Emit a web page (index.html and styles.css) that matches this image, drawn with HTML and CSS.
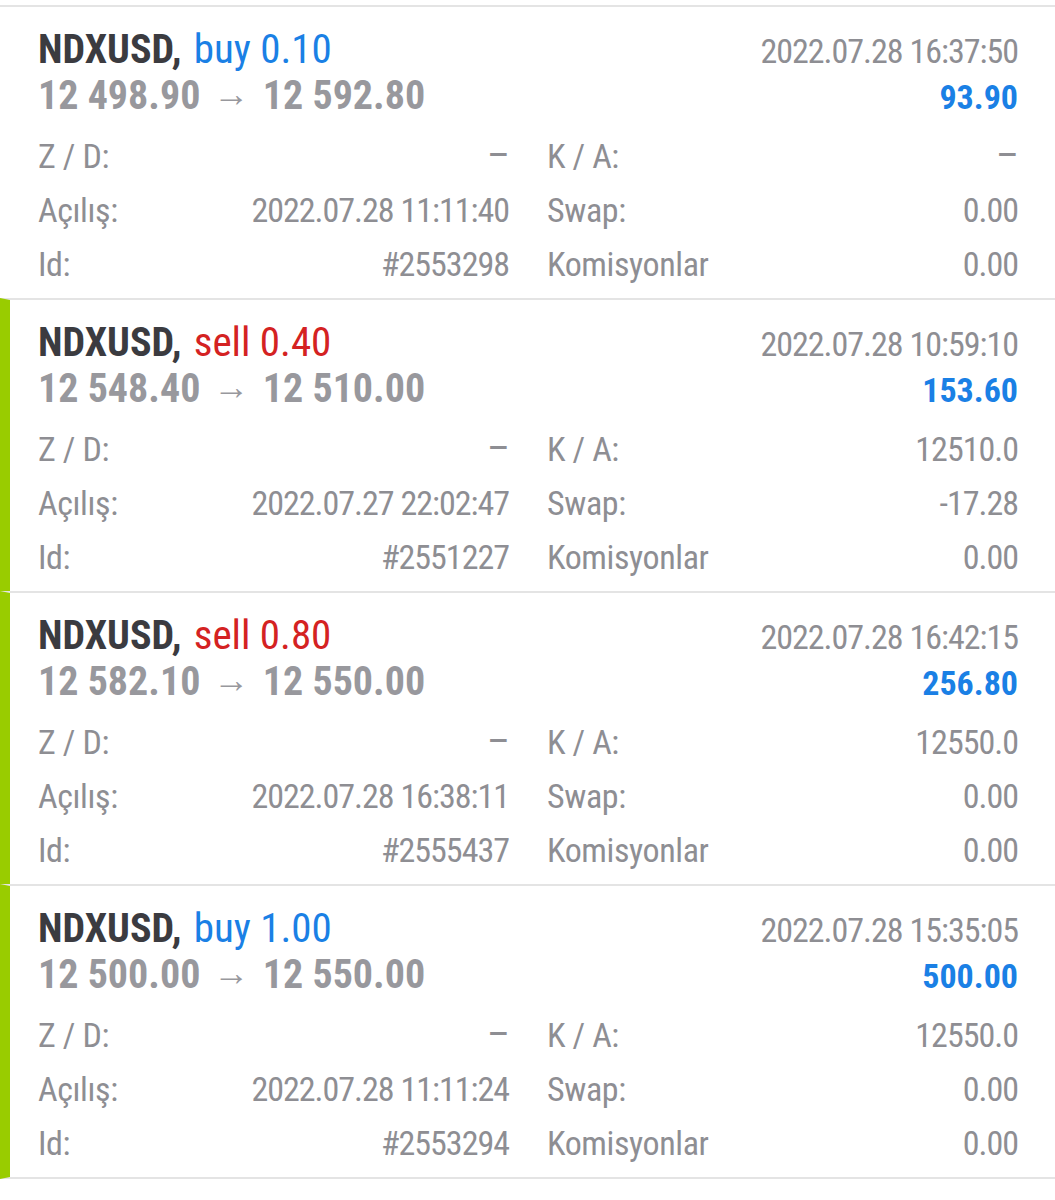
FILE: index.html
```html
<!DOCTYPE html>
<html lang="tr">
<head>
    <meta charset="UTF-8">
    <meta name="viewport" content="width=device-width, initial-scale=1.0">
    <title>Geçmiş</title>
    <link rel="stylesheet" href="styles.css">
</head>
<body>
    <div class="history">
        <div class="deal">
            <div class="deal-head">
                <div class="deal-title">
                    <div class="symbol">NDXUSD, <span class="buy">buy 0.10</span></div>
                    <div class="prices">12 498.90 <span class="arrow">&rarr;</span> 12 592.80</div>
                </div>
                <div class="deal-result">
                    <div class="time">2022.07.28 16:37:50</div>
                    <div class="profit">93.90</div>
                </div>
            </div>
            <div class="deal-info">
                <div class="info-row"><span>Z / D:</span><span class="dash">&ndash;</span></div>
                <div class="info-row"><span>K / A:</span><span class="dash">&ndash;</span></div>
                <div class="info-row"><span>Açılış:</span><span>2022.07.28 11:11:40</span></div>
                <div class="info-row"><span>Swap:</span><span>0.00</span></div>
                <div class="info-row"><span>Id:</span><span>#2553298</span></div>
                <div class="info-row"><span>Komisyonlar</span><span>0.00</span></div>
            </div>
        </div>

        <div class="deal marked">
            <div class="deal-head">
                <div class="deal-title">
                    <div class="symbol">NDXUSD, <span class="sell">sell 0.40</span></div>
                    <div class="prices">12 548.40 <span class="arrow">&rarr;</span> 12 510.00</div>
                </div>
                <div class="deal-result">
                    <div class="time">2022.07.28 10:59:10</div>
                    <div class="profit">153.60</div>
                </div>
            </div>
            <div class="deal-info">
                <div class="info-row"><span>Z / D:</span><span class="dash">&ndash;</span></div>
                <div class="info-row"><span>K / A:</span><span>12510.0</span></div>
                <div class="info-row"><span>Açılış:</span><span>2022.07.27 22:02:47</span></div>
                <div class="info-row"><span>Swap:</span><span>-17.28</span></div>
                <div class="info-row"><span>Id:</span><span>#2551227</span></div>
                <div class="info-row"><span>Komisyonlar</span><span>0.00</span></div>
            </div>
        </div>

        <div class="deal marked">
            <div class="deal-head">
                <div class="deal-title">
                    <div class="symbol">NDXUSD, <span class="sell">sell 0.80</span></div>
                    <div class="prices">12 582.10 <span class="arrow">&rarr;</span> 12 550.00</div>
                </div>
                <div class="deal-result">
                    <div class="time">2022.07.28 16:42:15</div>
                    <div class="profit">256.80</div>
                </div>
            </div>
            <div class="deal-info">
                <div class="info-row"><span>Z / D:</span><span class="dash">&ndash;</span></div>
                <div class="info-row"><span>K / A:</span><span>12550.0</span></div>
                <div class="info-row"><span>Açılış:</span><span>2022.07.28 16:38:11</span></div>
                <div class="info-row"><span>Swap:</span><span>0.00</span></div>
                <div class="info-row"><span>Id:</span><span>#2555437</span></div>
                <div class="info-row"><span>Komisyonlar</span><span>0.00</span></div>
            </div>
        </div>

        <div class="deal marked">
            <div class="deal-head">
                <div class="deal-title">
                    <div class="symbol">NDXUSD, <span class="buy">buy 1.00</span></div>
                    <div class="prices">12 500.00 <span class="arrow">&rarr;</span> 12 550.00</div>
                </div>
                <div class="deal-result">
                    <div class="time">2022.07.28 15:35:05</div>
                    <div class="profit">500.00</div>
                </div>
            </div>
            <div class="deal-info">
                <div class="info-row"><span>Z / D:</span><span class="dash">&ndash;</span></div>
                <div class="info-row"><span>K / A:</span><span>12550.0</span></div>
                <div class="info-row"><span>Açılış:</span><span>2022.07.28 11:11:24</span></div>
                <div class="info-row"><span>Swap:</span><span>0.00</span></div>
                <div class="info-row"><span>Id:</span><span>#2553294</span></div>
                <div class="info-row"><span>Komisyonlar</span><span>0.00</span></div>
            </div>
        </div>
    </div>
</body>
</html>
```

FILE: styles.css
```css
body {
    margin: 0;
    background-color: #fff;
    font-family: Roboto, "Liberation Sans", sans-serif;
    font-stretch: 75%;
    color: #8e8e93;
}

.history {
    padding-top: 5px;
}

.deal {
    border-top: 2px solid #e4e4e4;
    padding: 20px 37px 13px 38px;
    height: 258px;
}

.deal:last-child {
    border-bottom: 2px solid #e4e4e4;
}

.deal.marked {
    border-left: 10px solid #99cc00;
    padding-left: 28px;
}

.deal-head {
    display: flex;
    justify-content: space-between;
}

.symbol {
    font-size: 40px;
    font-weight: 700;
    color: #3b3b40;
    line-height: 44px;
}

.symbol span {
    font-weight: 400;
    font-size: 41px;
    margin-left: 3px;
}

.buy {
    color: #1a80e5;
}

.sell {
    color: #d42222;
}

.prices {
    font-size: 40px;
    font-weight: 700;
    color: #98989d;
    line-height: 48px;
}

.arrow {
    font-size: 36px;
    font-weight: 400;
    padding: 0 4px;
    position: relative;
    top: -3px;
}

.deal-result {
    text-align: right;
    padding-top: 2px;
}

.time {
    font-size: 34px;
    line-height: 44px;
    letter-spacing: -1px;
}

.profit {
    font-size: 34px;
    font-weight: 700;
    color: #1a80e5;
    line-height: 48px;
}

.deal-info {
    display: grid;
    grid-template-columns: 1fr 1fr;
    column-gap: 38px;
    margin-top: 8px;
}

.info-row {
    display: flex;
    justify-content: space-between;
    font-size: 34px;
    line-height: 54px;
    letter-spacing: -0.4px;
}

.info-row span:last-child {
    letter-spacing: -1px;
}

.info-row .dash {
    font-size: 40px;
    letter-spacing: 0;
}
```
